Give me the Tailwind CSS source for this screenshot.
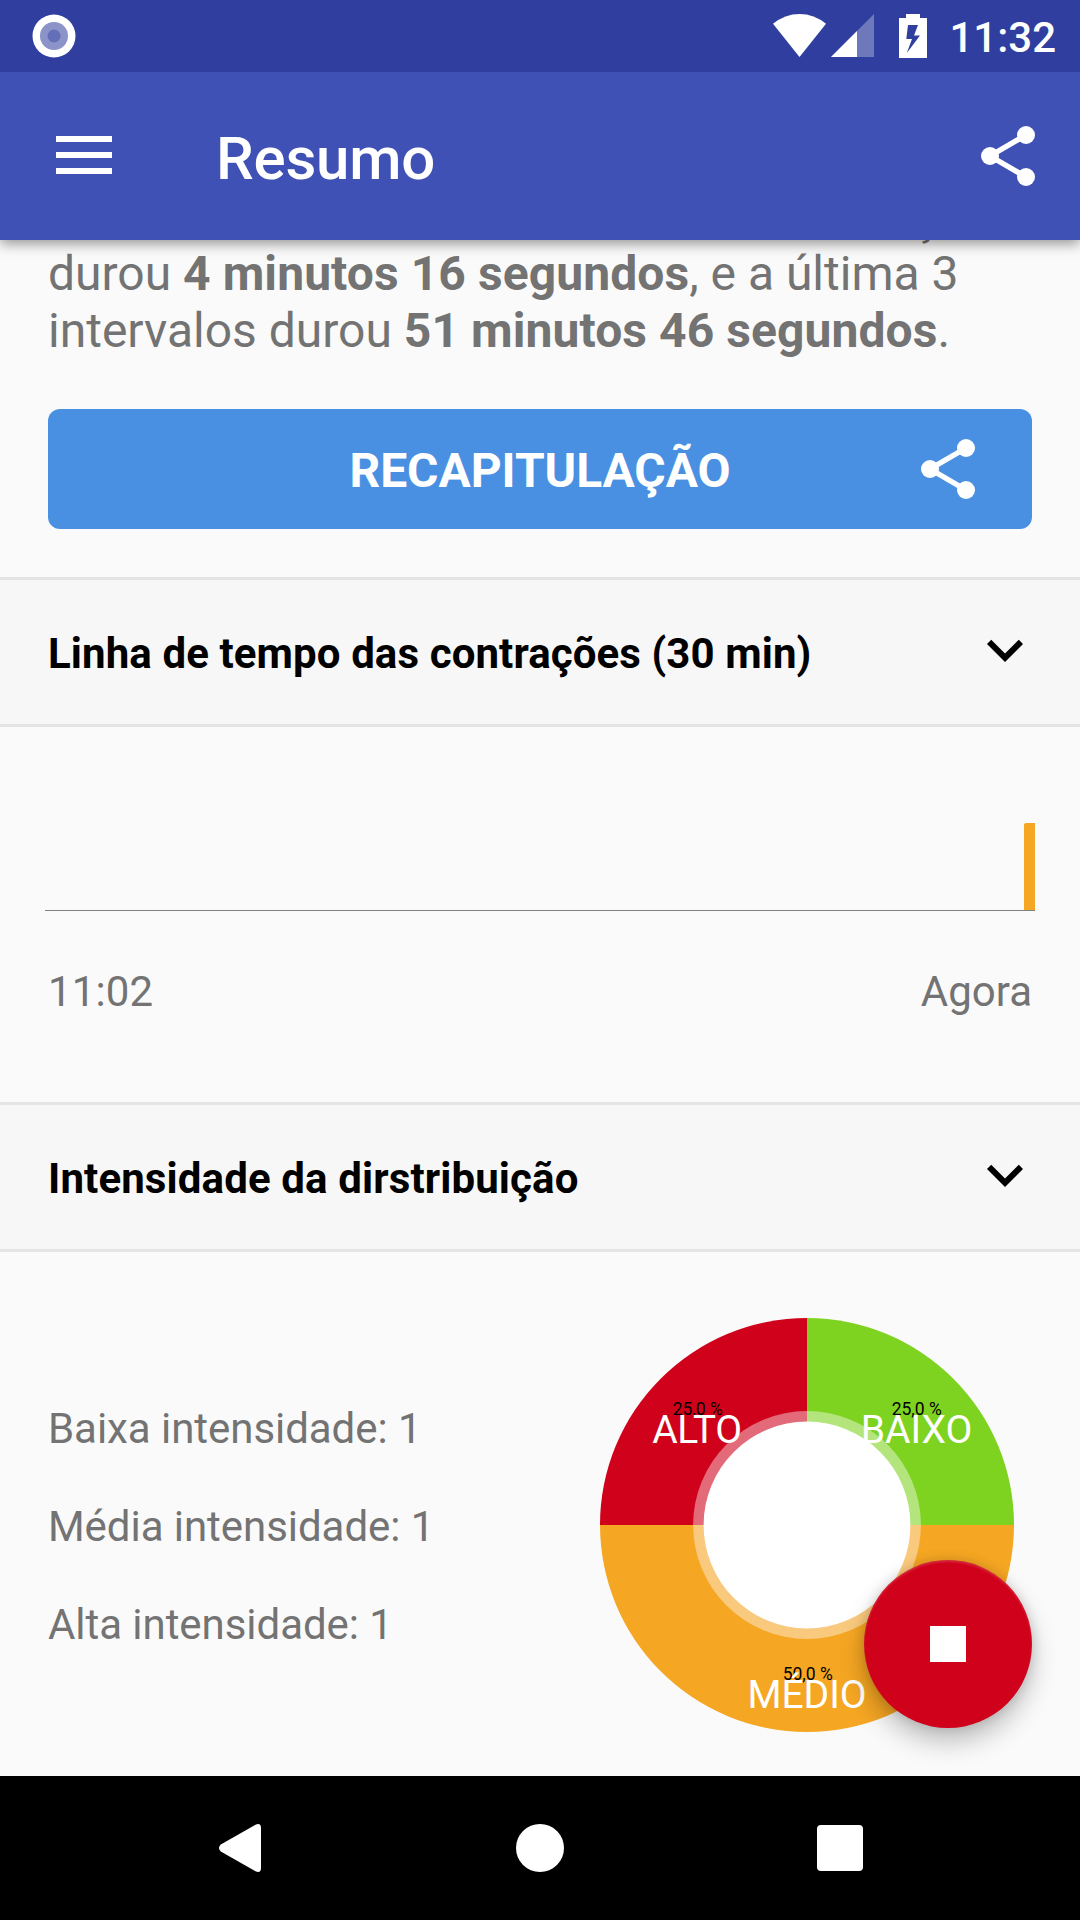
<!DOCTYPE html>
<html lang="pt">
<head>
<meta charset="utf-8">
<title>Resumo</title>
<script src="https://cdn.jsdelivr.net/npm/@tailwindcss/browser@4"></script>
</head>
<body class="flex h-[1920px] w-[1080px] flex-col overflow-hidden bg-[#fafafa] font-['Roboto',sans-serif] text-[#737373]">
  <!-- Status bar -->
  <div class="z-20 flex h-[72px] shrink-0 items-center justify-between bg-[#303f9f] pl-8 pr-6 text-white">
    <svg class="h-11 w-11" viewBox="0 0 44 44"><circle cx="22" cy="22" r="21.5" fill="#fff"/><circle cx="22" cy="22" r="14" fill="#8b93c9"/><circle cx="22" cy="22" r="6.5" fill="#656fb7"/></svg>
    <div class="flex items-center">
      <svg class="h-[44px] w-[53px]" viewBox="0 0 53 44"><path d="M0 9.8Q12 0 26.500 0T53 9.800L26.500 43z" fill="#fff"/></svg>
      <svg class="ml-[5px] h-[44px] w-[43px]" viewBox="0 0 43 44"><path d="M43 0V43H0z" fill="#fff" opacity=".3"/><path d="M26 17V43H0z" fill="#fff"/></svg>
      <svg class="ml-[25px] h-[44px] w-[28px]" viewBox="0 0 28 44"><path fill="#fff" fill-rule="evenodd" d="M7 0H21V4H28V44H0V4H7zM9 11L7.300 25H13L7.800 39L21 21.500H15L19 11z"/></svg>
      <span class="ml-[22px] pt-1 text-[42px] font-medium leading-[50px]">11:32</span>
    </div>
  </div>
  <!-- App bar -->
  <header class="z-10 flex h-[168px] shrink-0 items-center bg-[#3f51b5] pl-14 pr-9 text-white shadow-[0_4px_12px_rgba(0,0,0,0.4)]">
    <div class="flex w-14 flex-col gap-[10px] pb-[2px]">
      <div class="h-[6px] bg-white"></div><div class="h-[6px] bg-white"></div><div class="h-[6px] bg-white"></div>
    </div>
    <h1 class="ml-[104px] flex-1 pt-[5px] text-[60px] font-medium leading-[70px] tracking-[-0.25px]">Resumo</h1>
    <svg class="h-[72px] w-[72px]" viewBox="0 0 24 24" fill="#fff"><path d="M18 5L6 12L18 19" fill="none" stroke="#fff" stroke-width="1.8"/><circle cx="18" cy="5" r="3"/><circle cx="6" cy="12" r="3"/><circle cx="18" cy="19" r="3"/></svg>
  </header>
  <main class="-mt-[52px] flex h-[1588px] shrink-0 flex-col">
    <div class="px-12 text-[48px] leading-[57px]">
      <p class="pl-[728px]">contração</p>
      <p class="whitespace-nowrap">durou <b class="tracking-[0.08px]">4 minutos 16 segundos</b>, e a última 3</p>
      <p class="whitespace-nowrap">intervalos durou <b class="tracking-[0.08px]">51 minutos 46 segundos</b>.</p>
    </div>
    <button class="mx-12 mt-[50px] grid h-[120px] shrink-0 grid-cols-[72px_1fr_72px] items-center rounded-xl bg-[#4a90e2] px-12 text-white">
      <span class="col-start-2 pt-[3px] text-[48px] font-bold leading-[57px] tracking-[-0.04px]">RECAPITULAÇÃO</span>
      <svg class="h-[72px] w-[72px]" viewBox="0 0 24 24" fill="#fff"><path d="M18 5L6 12L18 19" fill="none" stroke="#fff" stroke-width="1.8"/><circle cx="18" cy="5" r="3"/><circle cx="6" cy="12" r="3"/><circle cx="18" cy="19" r="3"/></svg>
    </button>
    <section class="mt-12 flex h-[150px] shrink-0 items-center justify-between border-y-[3px] border-[#e4e4e4] bg-[#f7f7f7] pl-12 pr-[39px]">
      <h2 class="pt-[3px] text-[42px] font-bold leading-[50px] tracking-[0.1px] text-black">Linha de tempo das contrações (30 min)</h2>
      <svg class="mb-1 h-[72px] w-[72px]" viewBox="0 0 24 24"><path d="M16.590 8.590L12 13.170 7.410 8.590 6 10l6 6 6-6z"/></svg>
    </section>
    <!-- Timeline chart -->
    <div class="mx-[45px] flex h-[184px] shrink-0 items-end justify-end border-b border-[#808080]">
      <div class="h-[87px] w-[11px] rounded-tl-[2px] bg-[#f5a623]"></div>
    </div>
    <div class="mt-14 flex justify-between px-12 text-[42px] leading-[50px]"><span class="tracking-[0.15px]">11:02</span><span>Agora</span></div>
    <section class="mt-[85px] flex h-[150px] shrink-0 items-center justify-between border-y-[3px] border-[#e4e4e4] bg-[#f7f7f7] pl-12 pr-[39px]">
      <h2 class="pt-[3px] text-[42px] font-bold leading-[50px] tracking-[0.12px] text-black">Intensidade da dirstribuição</h2>
      <svg class="mb-1 h-[72px] w-[72px]" viewBox="0 0 24 24"><path d="M16.590 8.590L12 13.170 7.410 8.590 6 10l6 6 6-6z"/></svg>
    </section>
    <div class="relative flex h-[524px] shrink-0 justify-between pl-12 pr-[66px]">
      <ul class="flex flex-col gap-12 pt-[152px] text-[42px] leading-[50px] tracking-[-0.05px]">
        <li>Baixa intensidade: 1</li><li>Média intensidade: 1</li><li>Alta intensidade: 1</li>
      </ul>
      <svg class="mt-[66px] h-[414px] w-[414px]" viewBox="600 1318 414 414" text-anchor="middle">
        <path d="M807 1525V1318A207 207 0 0 1 1014 1525z" fill="#7ed321"/>
        <path d="M807 1525H1014A207 207 0 0 1 600 1525z" fill="#f5a623"/>
        <path d="M807 1525H600A207 207 0 0 1 807 1318z" fill="#d0021b"/>
        <circle cx="807" cy="1525" r="113.900" fill="#fff" opacity=".41"/>
        <circle cx="807" cy="1525" r="103.400" fill="#fff"/>
        <g class="text-[17.5px]" fill="#000"><text x="697.700" y="1415">25,0 %</text><text x="916.700" y="1415">25,0 %</text><text x="807.700" y="1680">50,0 %</text></g>
        <g class="text-[39px]" fill="#fff"><text x="697" y="1443" class="tracking-[-0.3px]">ALTO</text><text x="916.500" y="1443">BAIXO</text><text x="807" y="1708">MÉDIO</text></g>
      </svg>
      <button class="absolute bottom-12 right-12 flex h-[168px] w-[168px] items-center justify-center rounded-full bg-[#d0021b] shadow-[0_14px_26px_rgba(0,0,0,0.24),0_0_12px_rgba(0,0,0,0.14),inset_0_2px_2px_rgba(255,255,255,0.15)]"><span class="h-9 w-9 bg-white"></span></button>
    </div>
  </main>
  <!-- Navigation bar -->
  <nav class="z-10 flex h-[144px] shrink-0 items-center justify-between bg-black pl-[219px] pr-[217px]">
    <svg class="h-12 w-[42px]" viewBox="0 0 42 48"><path fill="#fff" d="M1.800 20.400L36.500 .7Q42-1.500 42 4V44Q42 49.500 36.500 47.300L1.800 27.600Q-1.800 24 1.800 20.400z"/></svg>
    <div class="ml-[2px] h-12 w-12 rounded-full bg-white"></div>
    <div class="h-[46px] w-[46px] rounded-[4px] bg-white"></div>
  </nav>
</body>
</html>
